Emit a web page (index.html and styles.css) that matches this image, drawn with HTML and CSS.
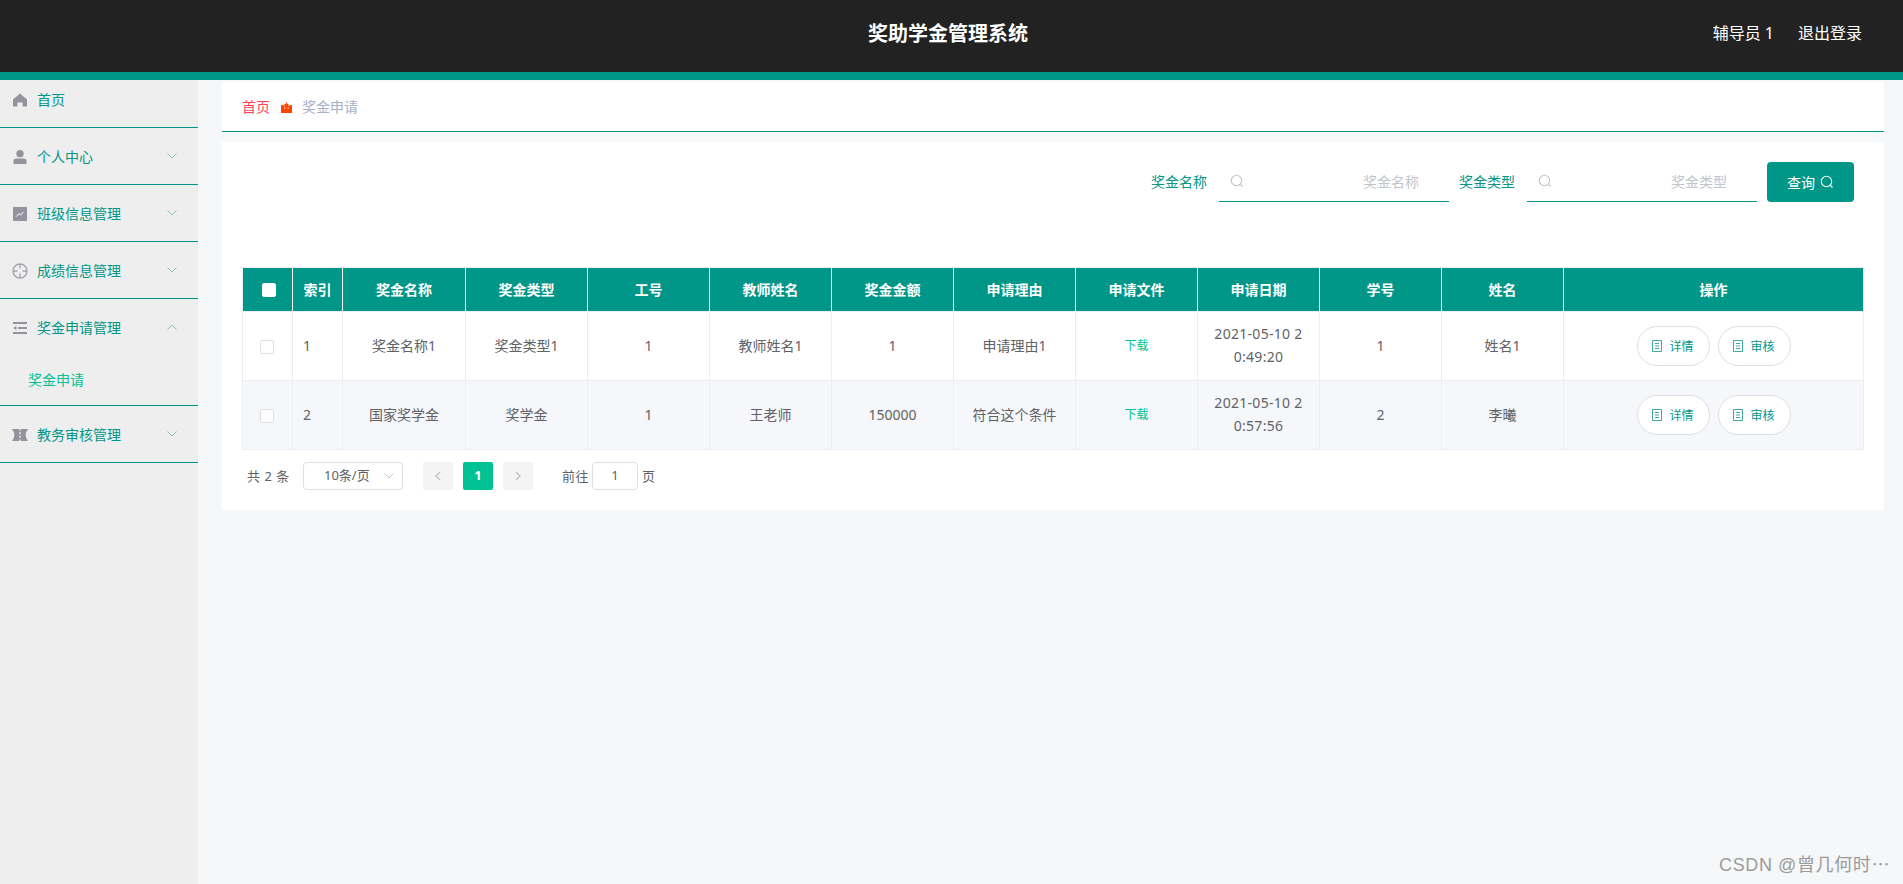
FILE: index.html
```html
<!DOCTYPE html>
<html lang="zh-CN">
<head>
<meta charset="utf-8">
<title>奖助学金管理系统</title>
<link rel="stylesheet" href="styles.css">
</head>
<body>
<header class="topbar">
  <div class="topbar-title">奖助学金管理系统</div>
  <div class="topbar-user"><span>辅导员 1</span><span>退出登录</span></div>
</header>
<div class="shell">
  <aside class="sidebar">
    <div class="menu-item first">
      <div class="menu-title">
        <svg class="menu-icon" viewBox="0 0 14 14"><path d="M7 0.5 L14 6.5 V13.5 H9.6 V9.5 H4.4 V13.5 H0 V6.5 Z"/></svg>
        <span>首页</span>
      </div>
    </div>
    <div class="menu-item">
      <div class="menu-title">
        <svg class="menu-icon" viewBox="0 0 14 15"><circle cx="7" cy="4" r="3.9"/><path d="M0 15 V12 Q0 9 3 9 H11 Q14 9 14 12 V15 Z"/></svg>
        <span>个人中心</span>
        <svg class="chev" viewBox="0 0 10 6"><path d="M0.5 0.5 L5 5 L9.5 0.5"/></svg>
      </div>
    </div>
    <div class="menu-item">
      <div class="menu-title">
        <svg class="menu-icon" viewBox="0 0 14 14"><path fill-rule="evenodd" d="M0 0 H14 V14 H0 Z M3 10 L6 7.5 L7.5 8.5 L11 5 L10.5 4.5 L7.5 7.3 L6 6.3 L2.6 9.4 Z"/></svg>
        <span>班级信息管理</span>
        <svg class="chev" viewBox="0 0 10 6"><path d="M0.5 0.5 L5 5 L9.5 0.5"/></svg>
      </div>
    </div>
    <div class="menu-item">
      <div class="menu-title">
        <svg class="menu-icon wide" viewBox="0 0 16 16"><circle class="ring" cx="8" cy="8" r="7"/><path class="tick" d="M8 1 V5.5 M8 10.5 V15 M1 8 H5.5 M10.5 8 H15"/></svg>
        <span>成绩信息管理</span>
        <svg class="chev" viewBox="0 0 10 6"><path d="M0.5 0.5 L5 5 L9.5 0.5"/></svg>
      </div>
    </div>
    <div class="menu-item">
      <div class="menu-title">
        <svg class="menu-icon" viewBox="0 0 14 12"><path d="M0 0 H14 V2 H0 Z M5 5 H14 V7 H5 Z M0 10 H14 V12 H0 Z M0 6 L3.5 4 V8 Z"/></svg>
        <span>奖金申请管理</span>
        <svg class="chev" viewBox="0 0 10 6"><path d="M0.5 5.5 L5 1 L9.5 5.5"/></svg>
      </div>
      <div class="submenu-item">奖金申请</div>
    </div>
    <div class="menu-item">
      <div class="menu-title">
        <svg class="menu-icon wide" viewBox="0 0 16 12"><path fill-rule="evenodd" d="M0 0 H7.300 V1.500 H8.700 V0 H16 Q13.600 3 13.600 6 Q13.600 9 16 12 H8.700 V10.500 H7.300 V12 H0 Q2.400 9 2.400 6 Q2.400 3 0 0 Z M7.300 3.200 V5.200 H8.700 V3.200 Z M7.300 6.800 V8.800 H8.700 V6.800 Z"/></svg>
        <span>教务审核管理</span>
        <svg class="chev" viewBox="0 0 10 6"><path d="M0.5 0.5 L5 5 L9.5 0.5"/></svg>
      </div>
    </div>
  </aside>
  <main class="main">
    <nav class="crumbs">
      <span class="crumb-home">首页</span>
      <svg class="crumb-icon" viewBox="0 0 11 11"><path fill-rule="evenodd" d="M0 3 H2.500 V4 H3.500 V2 H4.800 V0.500 H6.200 V2 H7.500 V4 H8.500 V3 H11 V11 H0 Z M3 5.500 V6.500 H4.500 V5.500 Z M6.500 5.500 V6.500 H8 V5.500 Z"/></svg>
      <span class="crumb-now">奖金申请</span>
    </nav>
    <section class="card">
      <form class="search">
        <label class="search-label">奖金名称</label>
        <div class="search-input">
          <svg class="search-icon" viewBox="0 0 14 14"><circle cx="6.500" cy="6.500" r="5.200"/><path d="M10.500 10.500 L12.500 12.500"/></svg>
          <span>奖金名称</span>
        </div>
        <label class="search-label">奖金类型</label>
        <div class="search-input">
          <svg class="search-icon" viewBox="0 0 14 14"><circle cx="6.500" cy="6.500" r="5.200"/><path d="M10.500 10.500 L12.500 12.500"/></svg>
          <span>奖金类型</span>
        </div>
        <button class="search-btn" type="button"><span>查询</span>
          <svg class="btn-icon" viewBox="0 0 14 14"><circle cx="6.500" cy="6.500" r="5.200"/><path d="M10.500 10.500 L12.500 12.500"/></svg>
        </button>
      </form>
      <table class="grid">
        <colgroup>
          <col class="c-s"><col class="c-s"><col class="c-l">
          <col class="c-m"><col class="c-m"><col class="c-m"><col class="c-m"><col class="c-m"><col class="c-m"><col class="c-m"><col class="c-m"><col class="c-m">
          <col class="c-x">
        </colgroup>
        <thead>
          <tr>
            <th><span class="check head-check"></span></th>
            <th>索引</th><th>奖金名称</th><th>奖金类型</th><th>工号</th><th>教师姓名</th><th>奖金金额</th><th>申请理由</th><th>申请文件</th><th>申请日期</th><th>学号</th><th>姓名</th><th>操作</th>
          </tr>
        </thead>
        <tbody>
          <tr>
            <td><span class="check"></span></td>
            <td class="idx">1</td><td>奖金名称1</td><td>奖金类型1</td><td>1</td><td>教师姓名1</td><td>1</td><td>申请理由1</td>
            <td><a class="dl">下载</a></td>
            <td class="date">2021-05-10 20:49:20</td>
            <td>1</td><td>姓名1</td>
            <td class="op-cell"><div class="ops">
              <button class="op" type="button"><svg class="op-icon" viewBox="0 0 10 12"><path d="M0.500 0.500 H9.500 V11.500 H0.500 Z M3 3.500 H7 M3 6 H7 M3 8.500 H7"/></svg>详情</button>
              <button class="op" type="button"><svg class="op-icon" viewBox="0 0 10 12"><path d="M0.500 0.500 H9.500 V11.500 H0.500 Z M3 3.500 H7 M3 6 H7 M3 8.500 H7"/></svg>审核</button>
            </div></td>
          </tr>
          <tr class="alt">
            <td><span class="check"></span></td>
            <td class="idx">2</td><td>国家奖学金</td><td>奖学金</td><td>1</td><td>王老师</td><td>150000</td><td>符合这个条件</td>
            <td><a class="dl">下载</a></td>
            <td class="date">2021-05-10 20:57:56</td>
            <td>2</td><td>李曦</td>
            <td class="op-cell"><div class="ops">
              <button class="op" type="button"><svg class="op-icon" viewBox="0 0 10 12"><path d="M0.500 0.500 H9.500 V11.500 H0.500 Z M3 3.500 H7 M3 6 H7 M3 8.500 H7"/></svg>详情</button>
              <button class="op" type="button"><svg class="op-icon" viewBox="0 0 10 12"><path d="M0.500 0.500 H9.500 V11.500 H0.500 Z M3 3.500 H7 M3 6 H7 M3 8.500 H7"/></svg>审核</button>
            </div></td>
          </tr>
        </tbody>
      </table>
      <div class="pager">
        <span class="total">共 2 条</span>
        <div class="size">10条/页<svg class="size-chev" viewBox="0 0 10 6"><path d="M0.500 0.500 L5 5 L9.500 0.500"/></svg></div>
        <span class="page-btn"><svg viewBox="0 0 6 10"><path d="M5 1 L1 5 L5 9"/></svg></span>
        <span class="page-num">1</span>
        <span class="page-btn"><svg viewBox="0 0 6 10"><path d="M1 1 L5 5 L1 9"/></svg></span>
        <span class="goto">前往</span>
        <span class="goto-input">1</span>
        <span class="goto-end">页</span>
      </div>
    </section>
  </main>
</div>
<div class="watermark">CSDN @曾几何时⋯</div>
</body>
</html>
```

FILE: styles.css
```css
* { box-sizing: border-box; }
html, body { margin: 0; height: 100%; }
body {
  height: 884px;
  overflow: hidden;
  font-family: "Noto Sans", "Noto Sans CJK SC", sans-serif;
  font-size: 14px;
  color: #606266;
  background: #f6f7f9;
  display: flex;
  flex-direction: column;
}

/* top bar */
.topbar {
  height: 80px;
  flex: none;
  background: #222;
  border-bottom: 8px solid #009688;
  color: #fff;
  display: grid;
  grid-template-columns: 1fr auto 1fr;
  align-items: center;
  padding: 0 41px 5px 34px;
}
.topbar-title {
  grid-column: 2;
  font-size: 20px;
  font-weight: 700;
  line-height: 28px;
}
.topbar-user {
  grid-column: 3;
  justify-self: end;
  display: flex;
  gap: 24px;
  font-size: 16px;
  line-height: 24px;
  margin-top: -1px;
}

.shell { flex: 1; display: flex; min-height: 0; }

/* sidebar */
.sidebar { width: 198px; flex: none; background: #eee; }
.menu-item { border-bottom: 1px solid #009688; }
.menu-title {
  height: 56px;
  padding: 9px 16px 7px 13px;
  display: flex;
  align-items: center;
  gap: 10px;
  color: #009688;
  line-height: 40px;
}
.menu-item.first .menu-title { height: 47px; padding-top: 0; padding-bottom: 7px; }
.menu-icon { width: 14px; height: 14px; flex: none; fill: #92939f; }
.menu-icon.wide { width: 16px; height: 16px; margin-left: -1px; margin-right: -1px; }
.menu-icon .ring { fill: none; stroke: #a3a4ae; stroke-width: 1.300; }
.menu-icon .tick { fill: none; stroke: #a3a4ae; stroke-width: 1.300; }
.chev {
  width: 10px;
  height: 6px;
  margin-left: auto;
  margin-right: 5px;
  margin-bottom: 3px;
  flex: none;
  fill: none;
  stroke: #7fc4bd;
  stroke-width: 1;
}
.submenu-item {
  height: 50px;
  line-height: 50px;
  padding-left: 28px;
  color: #00c292;
}

/* main */
.main { flex: 1; min-width: 0; padding: 2px 19px 0 24px; }
.crumbs {
  height: 50px;
  background: #fff;
  border-bottom: 1px solid #009688;
  padding: 1px 20px 0;
  display: flex;
  align-items: center;
  line-height: 20px;
}
.crumb-home { color: #ff3e5f; }
.crumb-icon { width: 11px; height: 11px; margin: 0 10px 0 11px; fill: #ff4500; }
.crumb-now { color: #a3b1c9; }

.card {
  margin-top: 10px;
  height: 368px;
  background: #fff;
  padding: 20px;
}
.search {
  display: flex;
  justify-content: flex-end;
  align-items: flex-start;
  height: 40px;
  padding-right: 10px;
  margin-bottom: 65px;
}
.search-label { color: #009688; line-height: 39px; margin-right: 12px; }
.search-input {
  width: 230px;
  height: 40px;
  border-bottom: 1px solid #009688;
  margin-right: 10px;
  padding: 0 30px 1px 11px;
  display: flex;
  align-items: center;
  justify-content: space-between;
  color: #c0c4cc;
}
.search-icon { width: 14px; height: 14px; fill: none; stroke: #c0c4cc; stroke-width: 1.100; }
.search-btn {
  width: 87px;
  height: 40px;
  border: 0;
  border-radius: 4px;
  background: #009688;
  color: #fff;
  font: inherit;
  display: flex;
  align-items: center;
  justify-content: center;
  gap: 5px;
  padding: 0 0 1px;
}
.btn-icon { width: 14px; height: 14px; fill: none; stroke: #fff; stroke-width: 1.100; }

/* table */
.grid {
  width: 1621px;
  table-layout: fixed;
  border-collapse: collapse;
}
.c-s { width: 50px; }
.c-l { width: 123px; }
.c-m { width: 122px; }
.c-x { width: 300px; }
.grid th {
  height: 44px;
  padding: 0 0 2px;
  background: #009688;
  color: #fff;
  font-weight: 700;
  border: 1px solid #fff;
  border-top-color: #ebeef5;
  border-bottom: 0;
  text-align: center;
}
.grid th:first-child { border-left-color: #ebeef5; }
.grid th:last-child { border-right-color: #ebeef5; }
.grid td {
  height: 69px;
  padding: 0 10px 2px;
  border: 1px solid #ebeef5;
  text-align: center;
  line-height: 23px;
}
.grid td.idx { text-align: left; }
.grid td.date { word-break: break-all; padding-left: 15px; padding-right: 15px; letter-spacing: 0.3px; }
.grid td.op-cell { padding-bottom: 0; }
.grid tr.alt td { background: #f5f7fb; }
.check {
  display: inline-block;
  width: 14px;
  height: 14px;
  border: 1px solid #dcdfe6;
  border-radius: 2px;
  background: #fff;
  vertical-align: middle;
  transform: translateX(-1px);
}
.head-check { border-color: #fff; transform: translateX(1px); }
.grid td:first-child { padding: 0 0 2px; }
.dl { color: #00c292; font-size: 12px; }
.ops { display: flex; justify-content: center; gap: 8px; }
.op {
  width: 73px;
  height: 40px;
  border: 1px solid #dcdfe6;
  border-radius: 20px;
  background: #fff;
  color: #009688;
  font: inherit;
  font-size: 12px;
  padding: 0;
  display: flex;
  align-items: center;
  justify-content: center;
  gap: 7px;
}
.op-icon { width: 10px; height: 12px; fill: none; stroke: #3fa89f; stroke-width: 1; }

/* pagination */
.pager {
  display: flex;
  align-items: center;
  height: 28px;
  margin-top: 12px;
  padding-left: 5px;
  font-size: 13px;
  line-height: 26px;
}
.total { width: 56px; word-spacing: 1px; }
.size {
  width: 100px;
  height: 28px;
  border: 1px solid #dcdfe6;
  border-radius: 4px;
  padding-left: 20px;
  line-height: 24px;
  position: relative;
  margin-right: 20px;
}
.size-chev {
  position: absolute;
  right: 8px;
  top: 10px;
  width: 10px;
  height: 6px;
  fill: none;
  stroke: #c0c4cc;
  stroke-width: 1;
}
.page-btn {
  width: 30px;
  height: 28px;
  border-radius: 2px;
  background: #f4f4f5;
  display: flex;
  align-items: center;
  justify-content: center;
}
.page-btn svg { width: 6px; height: 10px; fill: none; stroke: #c0c4cc; stroke-width: 1.500; }
.page-num {
  width: 30px;
  height: 28px;
  margin: 0 10px;
  border-radius: 2px;
  background: #00c292;
  color: #fff;
  font-weight: 700;
  text-align: center;
  line-height: 27px;
}
.goto { margin-left: 29px; margin-right: 3px; letter-spacing: 0.5px; }
.goto-input {
  width: 46px;
  height: 28px;
  border: 1px solid #dcdfe6;
  border-radius: 4px;
  text-align: center;
  line-height: 24px;
}
.goto-end { margin-left: 4px; }

.watermark {
  position: absolute;
  right: 13px;
  bottom: 6px;
  font-family: "Liberation Sans", "Noto Sans CJK SC", sans-serif;
  font-size: 18px;
  letter-spacing: 0.6px;
  line-height: 26px;
  color: #9b9b9b;
}
```
